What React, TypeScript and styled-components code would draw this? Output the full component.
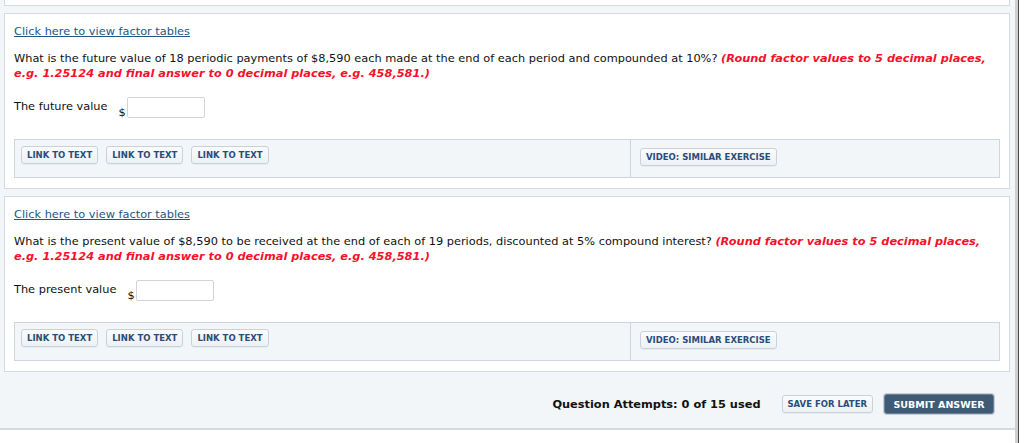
import React from 'react';
import styled, { createGlobalStyle } from 'styled-components';

const BG = '#f3f6f9';
const BORDER = '#d3dae2';
const LINK_BLUE = '#1d5786';
const BTN_BLUE = '#2a4c78';
const ALERT_RED = '#f8102a';
const TEXT_SIZE = '11.35px';

const GlobalStyle = createGlobalStyle`
  html, body {
    margin: 0;
    padding: 0;
    background: #ffffff;
    font-family: "DejaVu Sans", Verdana, sans-serif;
    color: #111;
  }
`;

const Page = styled.div`
  display: flex;
  flex-direction: row;
  width: 1024px;
  height: 443px;
  overflow: hidden;
`;

const Main = styled.div`
  width: 1015px;
  background: ${BG};
  display: flex;
  flex-direction: column;
  align-self: flex-start;
  border-bottom: 2px solid #d4dae1;
`;

const Gutter = styled.div`
  width: 9px;
  display: flex;
  flex-direction: row;

  &::before {
    content: '';
    width: 3px;
    background: #cfcfcf;
  }
  &::after {
    content: '';
    width: 1px;
    background: #4a4a4a;
  }
`;

const Questions = styled.div`
  display: flex;
  flex-direction: column;
  gap: 7px;
  padding: 0 5px 0 4px;
`;

const CardTail = styled.div`
  height: 5px;
  background: #fff;
  border: 1px solid ${BORDER};
  border-top: none;
`;

const Card = styled.div`
  background: #fff;
  border: 1px solid ${BORDER};
  padding: 10px 9px 10px 9px;
  display: flex;
  flex-direction: column;
`;

const FactorLink = styled.a`
  font-size: ${TEXT_SIZE};
  line-height: 15px;
  color: ${LINK_BLUE};
  text-decoration: underline;
  align-self: flex-start;
  cursor: pointer;
`;

const Question = styled.p`
  margin: 12px 0 0 0;
  font-size: ${TEXT_SIZE};
  line-height: 15px;
  color: #111;
`;

const Hint = styled.em`
  color: ${ALERT_RED};
  font-weight: bold;
`;

const AnswerRow = styled.div`
  display: flex;
  flex-direction: row;
  align-items: flex-start;
  margin-top: 16px;
`;

const AnswerLabel = styled.span`
  font-size: ${TEXT_SIZE};
  line-height: 15px;
  margin-top: 2px;
  margin-right: 11px;
`;

const Dollar = styled.span`
  font-size: ${TEXT_SIZE};
  line-height: 11px;
  align-self: flex-end;
  margin-right: 1px;
`;

const AmountInput = styled.input`
  width: 78px;
  height: 21px;
  box-sizing: border-box;
  border: 1px solid #cfd4d9;
  border-radius: 2px;
  background: #fff;
  padding: 0 4px;
  font: inherit;
  font-size: ${TEXT_SIZE};
`;

const ResourceBar = styled.div`
  display: grid;
  grid-template-columns: 615px 1fr;
  margin-top: 21px;
  border: 1px solid #cdd5de;
  background: ${BG};
  height: 39px;
  box-sizing: border-box;
`;

const ResourceCell = styled.div<{ $divided?: boolean; $top: number }>`
  display: flex;
  flex-direction: row;
  align-items: flex-start;
  gap: 8px;
  padding: ${p => p.$top}px 9px 0 ${p => (p.$divided ? 9 : 6)}px;
  border-left: ${p => (p.$divided ? '1px solid #cdd5de' : 'none')};
`;

const SmallButton = styled.button`
  font-family: "DejaVu Sans", Verdana, sans-serif;
  font-size: 8.5px;
  font-weight: bold;
  color: ${BTN_BLUE};
  background: linear-gradient(#fafbfc, #eef1f4);
  border: 1px solid #c9d1da;
  border-radius: 3px;
  box-shadow: 0 1px 0 rgba(0, 0, 0, 0.04);
  height: 18px;
  padding: 0 5px;
  line-height: 16px;
  white-space: nowrap;
  cursor: pointer;
`;

const Footer = styled.div`
  display: flex;
  flex-direction: row;
  justify-content: flex-end;
  align-items: center;
  height: 56px;
  padding: 8px 21px 0 0;
  box-sizing: border-box;
`;

const Attempts = styled.span`
  font-size: ${TEXT_SIZE};
  font-weight: bold;
  color: #111;
  margin-right: 21px;
`;

const SaveButton = styled(SmallButton)`
  margin-right: 11px;
`;

const SubmitButton = styled.button`
  font-family: "DejaVu Sans", Verdana, sans-serif;
  font-size: 9.5px;
  font-weight: bold;
  color: #fff;
  background: #3e5a75;
  border: 1px solid #6b8296;
  border-radius: 3px;
  box-shadow: 0 0 0 1px #c2cdd8;
  height: 20px;
  width: 110px;
  padding: 0;
  cursor: pointer;
`;

type QuestionData = {
  text: string;
  label: string;
};

const QUESTIONS: QuestionData[] = [
  {
    text: 'What is the future value of 18 periodic payments of $8,590 each made at the end of each period and compounded at 10%?',
    label: 'The future value',
  },
  {
    text: 'What is the present value of $8,590 to be received at the end of each of 19 periods, discounted at 5% compound interest?',
    label: 'The present value',
  },
];

const HINT = '(Round factor values to 5 decimal places, e.g. 1.25124 and final answer to 0 decimal places, e.g. 458,581.)';

const QuestionCard: React.FC<{ q: QuestionData }> = ({ q }) => (
  <Card>
    <FactorLink>Click here to view factor tables</FactorLink>
    <Question>
      {q.text} <Hint>{HINT}</Hint>
    </Question>
    <AnswerRow>
      <AnswerLabel>{q.label}</AnswerLabel>
      <Dollar>$</Dollar>
      <AmountInput type="text" />
    </AnswerRow>
    <ResourceBar>
      <ResourceCell $top={6}>
        <SmallButton>LINK TO TEXT</SmallButton>
        <SmallButton>LINK TO TEXT</SmallButton>
        <SmallButton>LINK TO TEXT</SmallButton>
      </ResourceCell>
      <ResourceCell $divided $top={8}>
        <SmallButton>VIDEO: SIMILAR EXERCISE</SmallButton>
      </ResourceCell>
    </ResourceBar>
  </Card>
);

const App: React.FC = () => {
  return (
    <>
      <GlobalStyle />
      <Page>
        <Main>
          <Questions>
            <CardTail />
            {QUESTIONS.map((q) => (
              <QuestionCard key={q.label} q={q} />
            ))}
          </Questions>
          <Footer>
            <Attempts>Question Attempts: 0 of 15 used</Attempts>
            <SaveButton>SAVE FOR LATER</SaveButton>
            <SubmitButton>SUBMIT ANSWER</SubmitButton>
          </Footer>
        </Main>
        <Gutter />
      </Page>
    </>
  );
};

export default App;
